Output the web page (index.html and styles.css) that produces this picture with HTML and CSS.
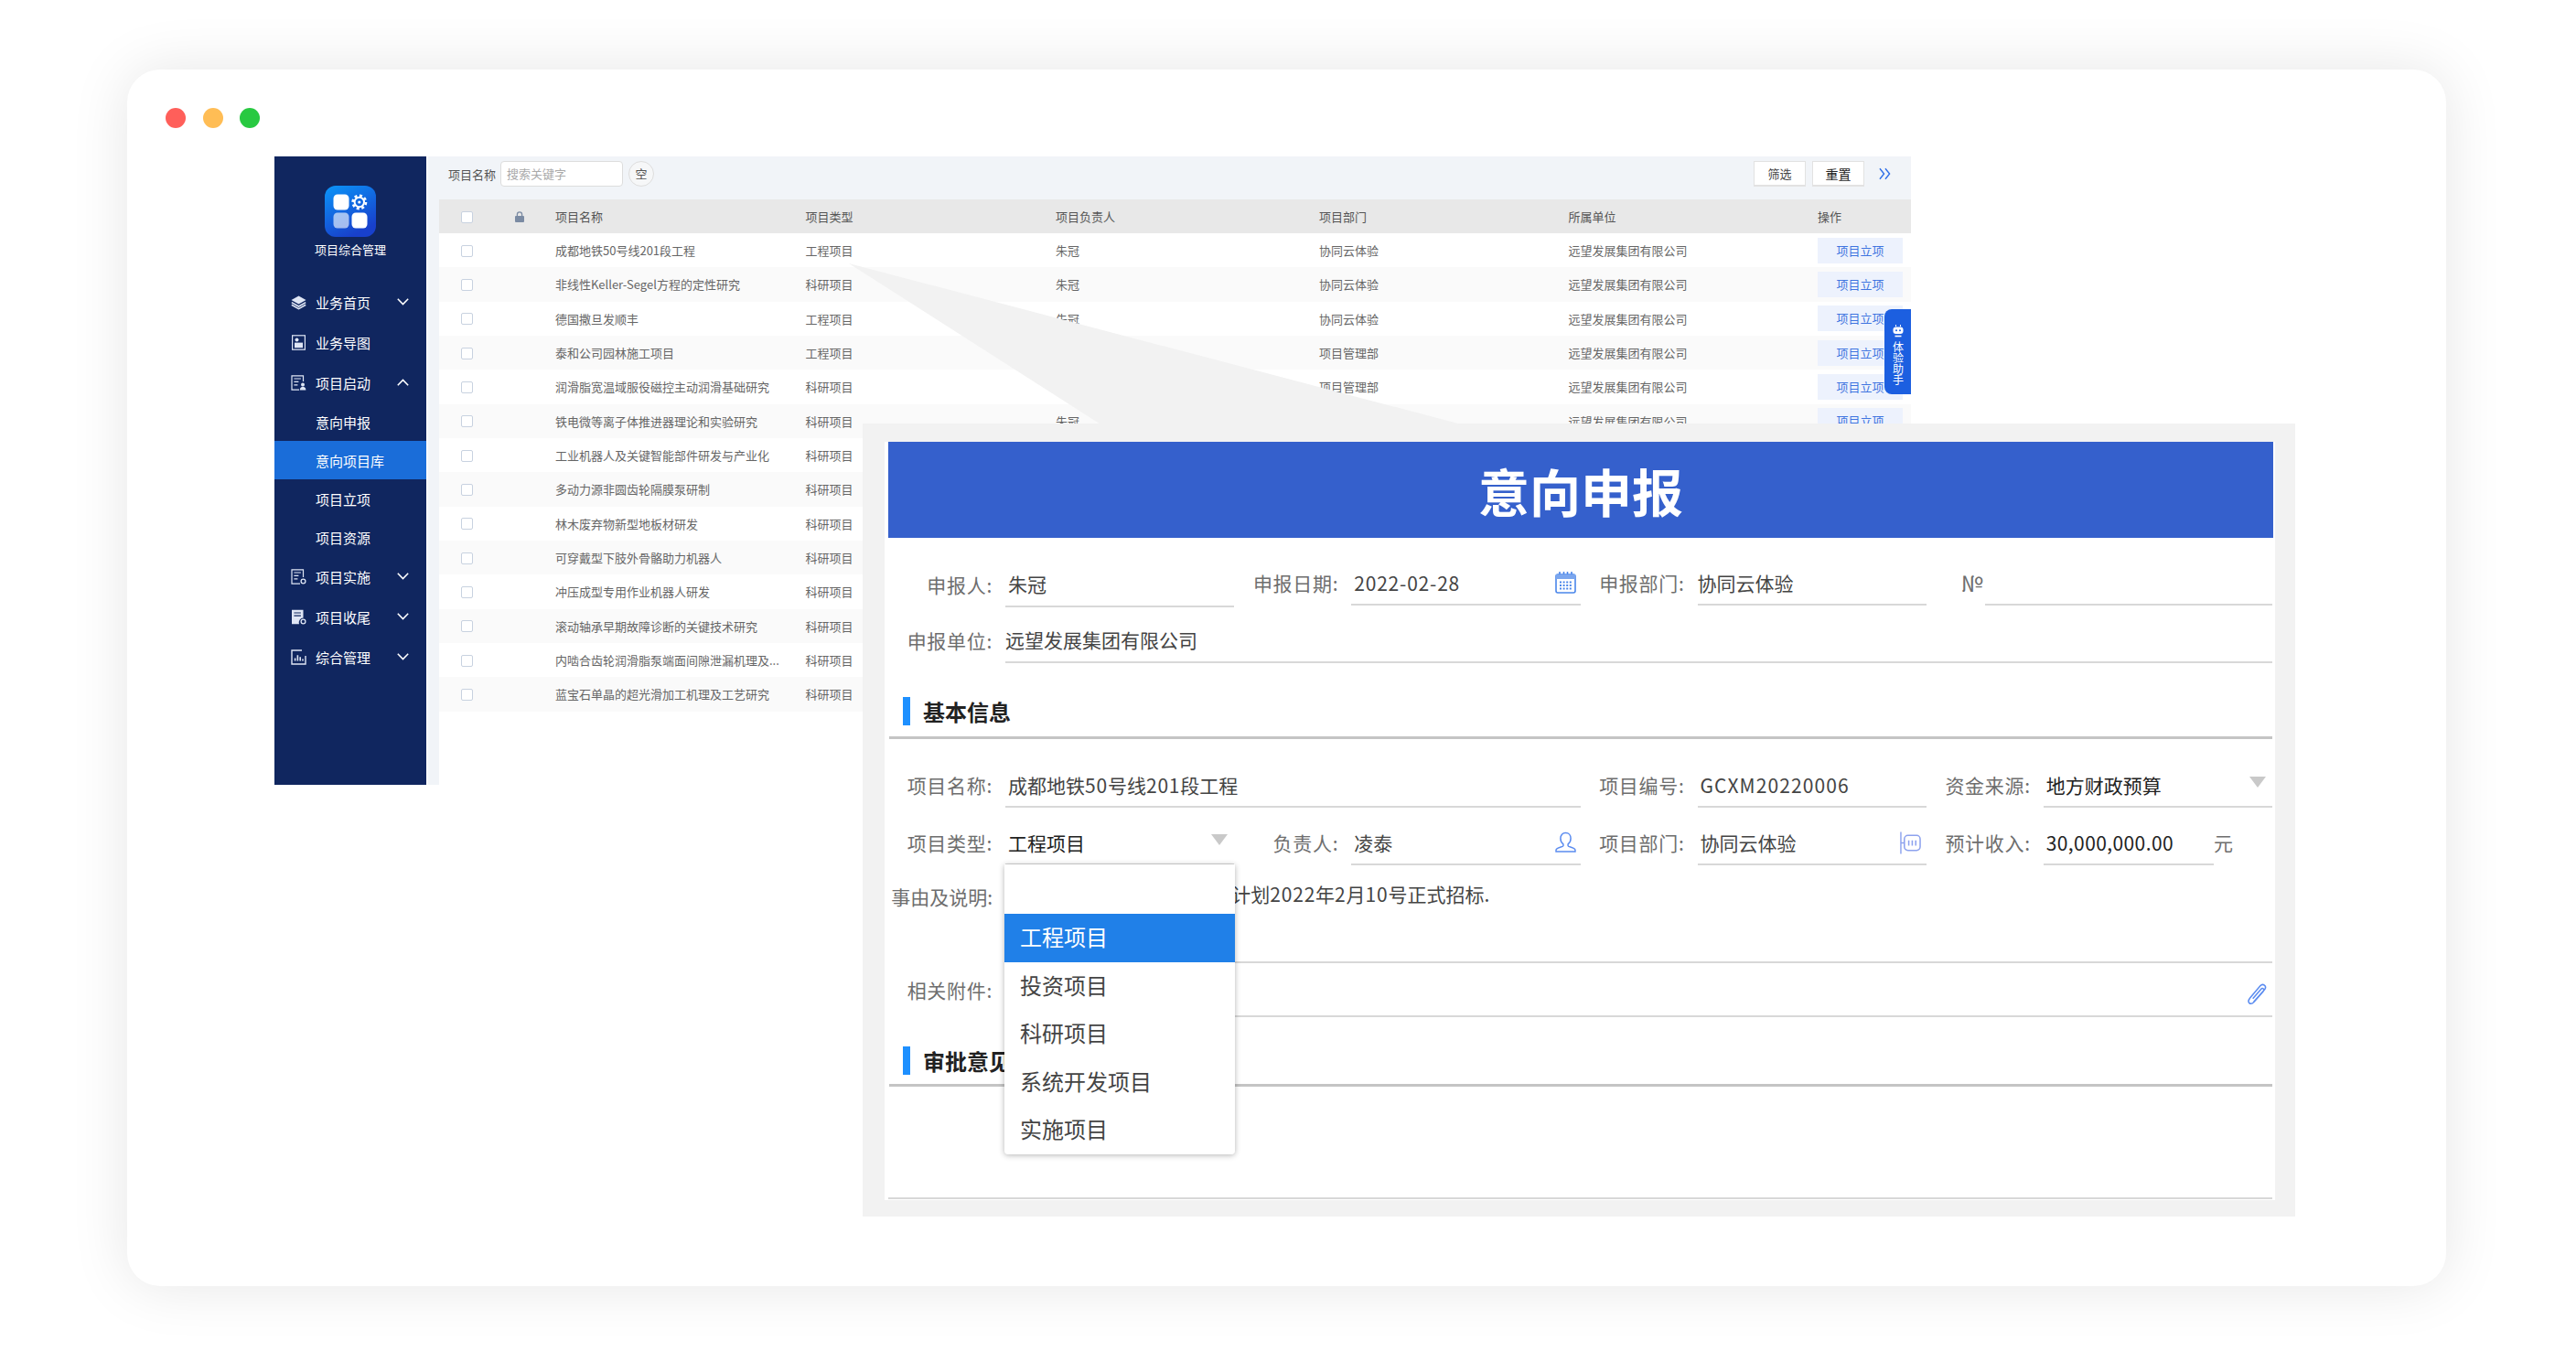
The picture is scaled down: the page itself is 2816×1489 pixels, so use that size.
FILE: index.html
```html
<!DOCTYPE html>
<html lang="zh-CN">
<head>
    <meta charset="UTF-8">
    <title>项目综合管理</title>
    <link rel="stylesheet" href="styles.css">
</head>
<body>
    <div class="window">
        <div class="dots">
            <span class="dot red"></span>
            <span class="dot yellow"></span>
            <span class="dot green"></span>
        </div>

        <div class="app">
            <aside class="sidebar">
                <svg class="logo" viewBox="0 0 56 56">
                    <defs>
                        <linearGradient id="logoFill" x1="0" y1="0" x2="0.5" y2="1">
                            <stop offset="0" stop-color="#0b95f8"/>
                            <stop offset="1" stop-color="#1840cc"/>
                        </linearGradient>
                    </defs>
                    <rect width="56" height="56" rx="12" fill="url(#logoFill)"/>
                    <rect x="9.5" y="9.5" width="17" height="17" rx="4.5" fill="#fff"/>
                    <rect x="9.5" y="29.5" width="17" height="17" rx="4.5" fill="#fff" opacity="0.62"/>
                    <rect x="29.5" y="29.5" width="17" height="17" rx="4.5" fill="#fff"/>
                    <circle cx="37.8" cy="18" r="7.2" fill="none" stroke="#fff" stroke-width="2.6" stroke-dasharray="3 2.65"/>
                    <circle cx="37.8" cy="18" r="5.2" fill="none" stroke="#fff" stroke-width="2"/>
                    <circle cx="37.8" cy="18" r="1.6" fill="#fff"/>
                </svg>
                <div class="app-title">项目综合管理</div>

                <nav class="menu">
                    <div class="menu-item">
                        <svg class="menu-icon" viewBox="0 0 17 17"><path d="M8.5 1.500 16.500 6 8.500 10.500.5 6z" fill="#dfe6f5"/><path d="M.8 8.600 8.500 13l7.700-4.400M.8 11.200l7.700 4.400 7.700-4.400" fill="none" stroke="#dfe6f5" stroke-width="1.6"/></svg>
                        <span>业务首页</span>
                        <svg class="chevron" viewBox="0 0 13 8"><path d="M.8.8 6.500 6.600 12.200.8"/></svg>
                    </div>
                    <div class="menu-item">
                        <svg class="menu-icon" viewBox="0 0 17 17"><rect x="1.6" y="0.8" width="13.8" height="15.4" fill="none" stroke="#dfe6f5" stroke-width="1.2"/><circle cx="6.5" cy="5.6" r="2" fill="#dfe6f5"/><rect x="4" y="8.6" width="9" height="5.6" fill="#dfe6f5"/></svg>
                        <span>业务导图</span>
                    </div>
                    <div class="menu-item">
                        <svg class="menu-icon" viewBox="0 0 17 17"><path d="M13.500 7V.8H1v15.400h8" fill="none" stroke="#dfe6f5" stroke-width="1.2"/><path d="M3.400 4h7.500M3.400 7.400h5M3.400 10.800h4" stroke="#dfe6f5" stroke-width="1.2"/><circle cx="13" cy="10.5" r="2" fill="#dfe6f5"/><path d="M9.800 16.500c0-5 6.600-5 6.600 0z" fill="#dfe6f5"/></svg>
                        <span>项目启动</span>
                        <svg class="chevron" viewBox="0 0 13 8"><path d="M.8 7.200 6.500 1.400 12.200 7.200"/></svg>
                    </div>
                    <div class="menu-sub">意向申报</div>
                    <div class="menu-sub active">意向项目库</div>
                    <div class="menu-sub">项目立项</div>
                    <div class="menu-sub">项目资源</div>
                    <div class="menu-item">
                        <svg class="menu-icon" viewBox="0 0 17 17"><path d="M13.500 9V.8H1v15.400h9" fill="none" stroke="#dfe6f5" stroke-width="1.2"/><path d="M3.400 4h7.500M3.400 7.400h5M3.400 10.800h4" stroke="#dfe6f5" stroke-width="1.2"/><circle cx="13.5" cy="13.5" r="2.4" fill="none" stroke="#dfe6f5" stroke-width="1.3"/></svg>
                        <span>项目实施</span>
                        <svg class="chevron" viewBox="0 0 13 8"><path d="M.8.8 6.500 6.600 12.200.8"/></svg>
                    </div>
                    <div class="menu-item">
                        <svg class="menu-icon" viewBox="0 0 17 17"><path d="M1 .8h12.500V9.500A5 5 0 0 0 9 16.200H1z" fill="#dfe6f5"/><path d="M3.400 4h7.500M3.400 7.200h7.500" stroke="#10265f" stroke-width="1.2"/><circle cx="13.5" cy="13.5" r="2.4" fill="none" stroke="#dfe6f5" stroke-width="1.3"/></svg>
                        <span>项目收尾</span>
                        <svg class="chevron" viewBox="0 0 13 8"><path d="M.8.8 6.500 6.600 12.200.8"/></svg>
                    </div>
                    <div class="menu-item">
                        <svg class="menu-icon" viewBox="0 0 17 17"><path d="M12 1H1v15h15V7" fill="none" stroke="#dfe6f5" stroke-width="1.4"/><path d="M4.600 12.500V9.500M7.400 12.500V6.200M10.200 12.500V8.200M13 12.500v-2" stroke="#dfe6f5" stroke-width="1.6"/></svg>
                        <span>综合管理</span>
                        <svg class="chevron" viewBox="0 0 13 8"><path d="M.8.8 6.500 6.600 12.200.8"/></svg>
                    </div>
                </nav>
            </aside>

            <main class="main">
                <div class="toolbar">
                    <span class="search-label">项目名称</span>
                    <div class="search-box">搜索关键字</div>
                    <div class="round-btn">空</div>
                    <div class="toolbar-right">
                        <div class="tool-btn">筛选</div>
                        <div class="tool-btn strong">重置</div>
                        <svg class="more" viewBox="0 0 14 14"><path d="M1 .8 6 7 1 13.200M7.500.8 12.500 7l-5 6.200"/></svg>
                    </div>
                </div>

                <div class="grid-table">
                    <div class="row head">
                        <span class="check"></span>
                        <svg class="lock" viewBox="0 0 10 12"><path d="M2.400 5V3.400a2.600 2.600 0 0 1 5.200 0V5" fill="none" stroke="#7b8ba3" stroke-width="1.3"/><rect y="5" width="10" height="7" rx="1" fill="#7b8ba3"/></svg>
                        <span>项目名称</span><span>项目类型</span><span>项目负责人</span><span>项目部门</span><span>所属单位</span><span>操作</span>
                    </div>
                    <div class="row">
                        <span class="check"></span><i></i>
                        <span>成都地铁50号线201段工程</span><span>工程项目</span><span>朱冠</span><span>协同云体验</span><span>远望发展集团有限公司</span><span class="op">项目立项</span>
                    </div>
                    <div class="row">
                        <span class="check"></span><i></i>
                        <span>非线性Keller-Segel方程的定性研究</span><span>科研项目</span><span>朱冠</span><span>协同云体验</span><span>远望发展集团有限公司</span><span class="op">项目立项</span>
                    </div>
                    <div class="row">
                        <span class="check"></span><i></i>
                        <span>德国撒旦发顺丰</span><span>工程项目</span><span>朱冠</span><span>协同云体验</span><span>远望发展集团有限公司</span><span class="op">项目立项</span>
                    </div>
                    <div class="row">
                        <span class="check"></span><i></i>
                        <span>泰和公司园林施工项目</span><span>工程项目</span><span></span><span>项目管理部</span><span>远望发展集团有限公司</span><span class="op">项目立项</span>
                    </div>
                    <div class="row">
                        <span class="check"></span><i></i>
                        <span>润滑脂宽温域服役磁控主动润滑基础研究</span><span>科研项目</span><span></span><span>项目管理部</span><span>远望发展集团有限公司</span><span class="op">项目立项</span>
                    </div>
                    <div class="row">
                        <span class="check"></span><i></i>
                        <span>铁电微等离子体推进器理论和实验研究</span><span>科研项目</span><span>朱冠</span><span></span><span>远望发展集团有限公司</span><span class="op">项目立项</span>
                    </div>
                    <div class="row">
                        <span class="check"></span><i></i>
                        <span>工业机器人及关键智能部件研发与产业化</span><span>科研项目</span>
                    </div>
                    <div class="row">
                        <span class="check"></span><i></i>
                        <span>多动力源非圆齿轮隔膜泵研制</span><span>科研项目</span>
                    </div>
                    <div class="row">
                        <span class="check"></span><i></i>
                        <span>林木废弃物新型地板材研发</span><span>科研项目</span>
                    </div>
                    <div class="row">
                        <span class="check"></span><i></i>
                        <span>可穿戴型下肢外骨骼助力机器人</span><span>科研项目</span>
                    </div>
                    <div class="row">
                        <span class="check"></span><i></i>
                        <span>冲压成型专用作业机器人研发</span><span>科研项目</span>
                    </div>
                    <div class="row">
                        <span class="check"></span><i></i>
                        <span>滚动轴承早期故障诊断的关键技术研究</span><span>科研项目</span>
                    </div>
                    <div class="row">
                        <span class="check"></span><i></i>
                        <span>内啮合齿轮润滑脂泵端面间隙泄漏机理及...</span><span>科研项目</span>
                    </div>
                    <div class="row">
                        <span class="check"></span><i></i>
                        <span>蓝宝石单晶的超光滑加工机理及工艺研究</span><span>科研项目</span>
                    </div>
                </div>
            </main>

            <div class="helper-tab">
                <svg viewBox="0 0 12 14"><path d="M3.500 0v2M8.500 0v2" stroke="#fff" stroke-width="1"/><rect x="0.5" y="2.5" width="11" height="7.5" rx="3" fill="#fff"/><circle cx="4" cy="6.2" r="1" fill="#1c5fe0"/><circle cx="8" cy="6.2" r="1" fill="#1c5fe0"/><path d="M2.500 12.500h7" stroke="#fff" stroke-width="1.6"/></svg>
                <span>体验助手</span>
            </div>
        </div>

        <div class="callout"></div>

        <section class="form-panel">
            <div class="form-sheet">
                <h1 class="form-title">意向申报</h1>

                <div class="form-row first">
                    <div class="field low">
                        <label>申报人:</label>
                        <div class="value">朱冠</div>
                    </div>
                    <div class="field">
                        <label>申报日期:</label>
                        <div class="value"><span class="num">2022-02-28</span>
                            <svg class="field-icon" viewBox="0 0 23 24"><path d="M5 0v5M9.500 0v5M13.500 0v5M18 0v5" stroke="#4a86ea" stroke-width="1.6"/><rect x="1" y="3" width="21" height="20" rx="2" fill="none" stroke="#4a86ea" stroke-width="1.6"/><rect x="1" y="3" width="21" height="5" fill="#7ba6ee"/><path d="M5 11.500h14M5 15h14M5 18.500h14" stroke="#4a86ea" stroke-width="1.8" stroke-dasharray="2 1.6"/></svg>
                        </div>
                    </div>
                    <div class="field">
                        <label>申报部门:</label>
                        <div class="value flush">协同云体验</div>
                    </div>
                    <div class="field number">
                        <label>№</label>
                        <div class="value"></div>
                    </div>
                </div>

                <div class="form-row second">
                    <div class="field wide">
                        <label>申报单位:</label>
                        <div class="value flush">远望发展集团有限公司</div>
                    </div>
                </div>

                <h2 class="section-title"><span>基本信息</span></h2>

                <div class="form-row third">
                    <div class="field span-2">
                        <label>项目名称:</label>
                        <div class="value"><span>成都地铁<span class="num">50</span>号线<span class="num">201</span>段工程</span></div>
                    </div>
                    <div class="field">
                        <label>项目编号:</label>
                        <div class="value"><span class="num wide-num">GCXM20220006</span></div>
                    </div>
                    <div class="field">
                        <label>资金来源:</label>
                        <div class="value dark">地方财政预算<span class="arrow"></span></div>
                    </div>
                </div>

                <div class="form-row fourth">
                    <div class="field">
                        <label>项目类型:</label>
                        <div class="value dark">工程项目<span class="arrow"></span></div>
                    </div>
                    <div class="field">
                        <label>负责人:</label>
                        <div class="value">凌泰
                            <svg class="field-icon" viewBox="0 0 23 23"><path d="M11.500 1c3.400 0 5.600 2.600 5.600 6 0 2.600-1.200 5-3 6.300v1.900c0 1 5.400 1.600 7.400 3.500.7.8.5 2.800.5 2.800H1s-.2-2 .5-2.800c2-1.900 7.400-2.500 7.400-3.500v-1.900c-1.800-1.300-3-3.700-3-6.300 0-3.400 2.200-6 5.600-6z" fill="none" stroke="#5b8cf0" stroke-width="1.5"/></svg>
                        </div>
                    </div>
                    <div class="field">
                        <label>项目部门:</label>
                        <div class="value">协同云体验
                            <svg class="field-icon dept" viewBox="0 0 24 25"><path d="M1 0v25M1 12.500h4" stroke="#8da2ee" stroke-width="1.5"/><rect x="5" y="4" width="18" height="17" rx="4" fill="none" stroke="#8da2ee" stroke-width="1.6"/><path d="M10 9.500v6M14 9.500v6M18 9.500v6" stroke="#8da2ee" stroke-width="1.6"/></svg>
                        </div>
                    </div>
                    <div class="field income">
                        <label>预计收入:</label>
                        <div class="value dark"><span class="money">30,000,000.00</span></div>
                        <span class="unit">元</span>
                    </div>
                </div>

                <div class="form-row fifth">
                    <div class="field wide tall">
                        <label>事由及说明:</label>
                        <div class="value flush"><span>成都地铁50号线201段工程计划<span class="num">2022</span>年<span class="num">2</span>月<span class="num">10</span>号正式招标.</span></div>
                    </div>
                </div>

                <div class="form-row sixth">
                    <div class="field wide attach">
                        <label>相关附件:</label>
                        <div class="value">
                            <svg class="field-icon clip" viewBox="0 0 24 24"><path d="M8 20.500 20.500 6.500c1.500-2 1-3.800-.3-4.800s-3.200-1-4.700.7L4 16c-2 2.500-2.500 4.700-1 6s3.500.7 5.500-1.500L19 8.500c.9-1.200.6-2.200 0-2.800s-1.700-.6-2.700.5L7 17" fill="none" stroke="#5b8cf0" stroke-width="1.6"/></svg>
                        </div>
                    </div>
                </div>

                <h2 class="section-title second-title"><span>审批意见</span></h2>
                <div class="opinion"></div>
            </div>

            <div class="dropdown">
                <div class="option blank"></div>
                <div class="option selected">工程项目</div>
                <div class="option">投资项目</div>
                <div class="option">科研项目</div>
                <div class="option">系统开发项目</div>
                <div class="option">实施项目</div>
            </div>
        </section>
    </div>
</body>
</html>
```

FILE: styles.css
```css
/* page + window frame */
body {
    margin: 0;
    height: 1489px;
    overflow: hidden;
    background-color: #fff;
    font-family: "Noto Sans CJK SC", "Noto Sans", sans-serif;
}

.window {
    position: relative;
    box-sizing: border-box;
    width: 2535px;
    height: 1330px;
    margin: 76px 0 0 139px;
    padding: 42px 0 0 42px;
    background-color: #fff;
    border-radius: 36px;
    box-shadow: 0 0 64px rgba(0, 0, 0, 0.1);
}

.dots {
    display: flex;
    gap: 18.5px;
    height: 22px;
}

.dot {
    width: 22px;
    height: 22px;
    border-radius: 50%;
}

.red { background-color: #ff5f5a; }
.yellow { background-color: #ffbd55; }
.green { background-color: #28c941; }

/* app screenshot */
.app {
    position: relative;
    display: flex;
    width: 1789px;
    height: 687px;
    margin: 31px 0 0 119px;
}

.sidebar {
    flex: 0 0 166px;
    padding-top: 32px;
    background-color: #10265f;
    color: #fff;
}

.logo {
    display: block;
    width: 56px;
    height: 56px;
    margin: 0 auto;
}

.app-title {
    margin-top: 4px;
    font-size: 13px;
    line-height: 20px;
    text-align: center;
}

.menu {
    margin-top: 25px;
    font-size: 15px;
}

.menu-item {
    display: flex;
    align-items: center;
    gap: 10px;
    height: 44px;
    padding: 0 19px 0 18px;
}

.menu-icon {
    flex: 0 0 17px;
    width: 17px;
    height: 17px;
}

.chevron {
    width: 13px;
    height: 8px;
    margin-left: auto;
    fill: none;
    stroke: #fff;
    stroke-width: 1.5;
}

.menu-sub {
    height: 42px;
    padding-left: 45px;
    line-height: 44px;
}

.menu-sub.active {
    background-color: #1a6dd9;
}

.main {
    flex: 1;
    display: flex;
    flex-direction: column;
    margin-left: 2px;
    background-color: #f1f4f8;
}

.toolbar {
    display: flex;
    align-items: center;
    flex: 0 0 47px;
    box-sizing: border-box;
    padding: 0 22px 9px 22px;
    font-size: 13px;
    color: #555;
}

.search-box {
    box-sizing: border-box;
    width: 134px;
    height: 28px;
    margin-left: 5px;
    padding-left: 6px;
    line-height: 26px;
    color: #aaa;
    background-color: #fff;
    border: 1px solid #ddd;
    border-radius: 4px;
}

.round-btn {
    box-sizing: border-box;
    width: 28px;
    height: 28px;
    margin-left: 6px;
    line-height: 26px;
    text-align: center;
    background-color: #f6f7f8;
    border: 1px solid #ddd;
    border-radius: 50%;
}

.toolbar-right {
    display: flex;
    align-items: center;
    gap: 7px;
    margin-left: auto;
}

.tool-btn {
    box-sizing: border-box;
    width: 57px;
    height: 28px;
    line-height: 26px;
    text-align: center;
    color: #444;
    background-color: #fff;
    border: 1px solid #e2e2e2;
    border-bottom-width: 2px;
}

.tool-btn.strong {
    font-size: 14px;
    color: #222;
}

.more {
    width: 13px;
    height: 14px;
    margin-left: 9px;
    fill: none;
    stroke: #2f6fe8;
    stroke-width: 1.5;
}

.grid-table {
    flex: 1;
    margin-left: 12px;
    background-color: #fff;
    font-size: 13px;
    color: #666;
}

.row {
    display: grid;
    grid-template-columns: 83px 44px 273.5px 273.5px 288px 272.5px 272.5px 102px;
    align-items: center;
    height: 37.33px;
    white-space: nowrap;
}

.row:nth-child(odd) {
    background-color: #fafafa;
}

.row.head {
    height: 37px;
    background-color: #e8e8e8;
    color: #555;
}

.check {
    box-sizing: border-box;
    width: 13px;
    height: 13px;
    margin: 1px 0 0 24px;
    background-color: #fff;
    border: 1.5px solid #c8d2e0;
    border-radius: 2px;
}

.lock {
    width: 10px;
    height: 12px;
}

.op {
    width: 93px;
    height: 28px;
    line-height: 28px;
    text-align: center;
    color: #3f74e0;
    background-color: #edf2fd;
}

.helper-tab {
    position: absolute;
    top: 167px;
    right: 0;
    display: flex;
    flex-direction: column;
    align-items: center;
    box-sizing: border-box;
    width: 29px;
    height: 93px;
    padding-top: 17px;
    font-size: 12px;
    color: #fff;
    background-color: #1c5fe0;
    border-radius: 8px 0 0 8px;
}

.helper-tab svg {
    width: 12px;
    height: 14px;
}

.helper-tab span {
    margin-top: 4px;
    line-height: 14px;
    writing-mode: vertical-rl;
}

/* grey wedge between the table row and the form */
.callout {
    position: absolute;
    top: 212px;
    left: 789px;
    width: 666px;
    height: 175px;
    background-color: #f2f2f2;
    clip-path: polygon(0 0, 100% 100%, 41.1% 100%);
}

/* form */
.form-panel {
    position: absolute;
    top: 387px;
    left: 804px;
    box-sizing: border-box;
    width: 1566px;
    height: 867px;
    padding: 20px 22px 18px 24px;
    background-color: #f2f2f2;
}

.form-sheet {
    height: 829px;
    padding: 0 3px 0 4px;
    background-color: #fff;
}

.form-title {
    height: 105px;
    margin: 0 -1px 0 0;
    font-size: 56px;
    font-weight: 700;
    line-height: 105px;
    text-align: center;
    color: #fff;
    background-color: #3560cc;
}

.form-row {
    display: grid;
    grid-template-columns: repeat(4, 1fr);
    align-items: start;
    font-size: 21px;
}

.form-row.first { margin-top: 26px; }
.form-row.second { margin-top: 13px; }
.form-row.third { margin-top: 27px; }
.form-row.fourth { margin-top: 15px; }
.form-row.fifth { margin-top: 8px; }
.form-row.sixth { margin-top: 11px; }

.field {
    display: flex;
    gap: 14px;
    min-width: 0;
    height: 48px;
    line-height: 46px;
}

.field label {
    flex: 0 0 114px;
    letter-spacing: 0.7px;
    text-align: right;
    white-space: nowrap;
    color: #6e6e6e;
}

.value {
    flex: 1;
    display: flex;
    justify-content: space-between;
    align-items: center;
    min-width: 0;
    padding-left: 3px;
    color: #444;
    white-space: nowrap;
    border-bottom: 2px solid #d8d8d8;
}

.value.flush { padding-left: 0; }
.value.dark { color: #222; }

.low .value,
.second .value { padding-bottom: 2px; }

.num { letter-spacing: 0.8px; }
.wide-num { letter-spacing: 1.1px; }
.money { letter-spacing: 0.4px; }

.field.low { margin-top: 2px; }
.field.wide { grid-column: 1 / -1; }
.field.span-2 { grid-column: span 2; }

.field.number label {
    flex: 0 0 62px;
    margin-right: -12px;
    font-size: 24px;
    letter-spacing: 0;
}

.field.tall { height: 99px; }
.field.tall label { line-height: 52px; letter-spacing: 0; }
.field.tall .value { align-items: flex-start; }

.field.attach label { line-height: 36px; }
.field.attach .value { justify-content: flex-end; padding-right: 0; }

.unit {
    flex: 0 0 64px;
    margin-left: -14px;
    color: #6e6e6e;
}

.field-icon {
    flex: 0 0 23px;
    width: 23px;
    height: 24px;
    margin-right: 5px;
}

.field-icon.dept {
    width: 24px;
    height: 25px;
    margin-right: 6px;
}

.arrow {
    width: 0;
    height: 0;
    margin: 0 7px 6px 0;
    border-top: 12px solid #c9c9c9;
    border-left: 9px solid transparent;
    border-right: 9px solid transparent;
}

.section-title {
    margin: 37px 0 0 1px;
    padding-bottom: 12px;
    font-size: 24px;
    font-weight: 700;
    line-height: 31px;
    color: #222;
    border-bottom: 3px solid #c4c4c4;
}

.section-title span {
    display: block;
    padding-left: 37px;
    background: linear-gradient(#1e90ff, #1e90ff) 15px 0 / 8px 31px no-repeat;
}

.section-title.second-title {
    margin-top: 32px;
    padding-bottom: 10px;
}

.opinion {
    height: 121px;
    border-bottom: 2px solid #d8d8d8;
}

.dropdown {
    position: absolute;
    top: 482px;
    left: 155px;
    width: 252px;
    height: 317px;
    font-size: 24px;
    color: #444;
    background-color: #fff;
    border-radius: 0 0 4px 4px;
    box-shadow: 0 1px 6px rgba(0, 0, 0, 0.3);
}

.option {
    height: 52.5px;
    padding-left: 17px;
    line-height: 50px;
}

.option.blank { height: 54px; }

.option.selected {
    color: #fff;
    background-color: #2080e8;
}
```
